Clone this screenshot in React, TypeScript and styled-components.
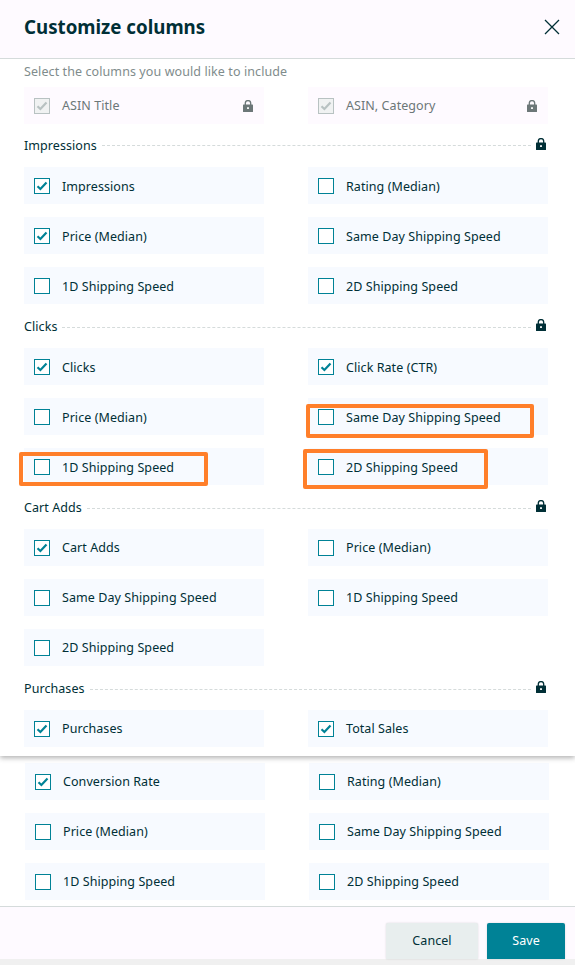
import React from "react";
import styled, { createGlobalStyle } from "styled-components";

const Global = createGlobalStyle`
  html, body { margin: 0; padding: 0; background: #f0f0f0; }
  body { font-family: "Noto Sans", "Open Sans", sans-serif; color: #002f36; }
  #root { width: 575px; height: 965px; overflow: hidden; }
`;

const Page = styled.div`
  width: 575px;
  height: 959px;
  background: #fff;
  display: flex;
  flex-direction: column;
`;

const TopSheet = styled.div`
  height: 756px;
  flex: none;
  background: #fff;
  box-shadow: 0 2px 5px rgba(0, 0, 0, 0.3);
  position: relative;
  z-index: 1;
`;

const Header = styled.header`
  box-sizing: border-box;
  background: #fefaff;
  border-bottom: 1px solid #d5dbdb;
  height: 59px;
  display: flex;
  align-items: center;
  justify-content: space-between;
  padding: 0 15px 4px 24px;
`;

const Title = styled.h1`
  margin: 0;
  font-size: 18.7px;
  line-height: 26px;
  font-weight: 700;
  color: #002f36;
`;

const CloseButton = styled.button`
  border: 0;
  padding: 0;
  background: none;
  width: 16px;
  height: 16px;
  display: flex;
  color: #002f36;
`;

const Body = styled.div`
  padding: 0 27px 0 24px;
`;

const Hint = styled.p`
  margin: 0;
  height: 28px;
  font-size: 12.5px;
  line-height: 26px;
  color: #7f8c8c;
  letter-spacing: 0.09px;
`;

const Row = styled.div<{ $locked?: boolean }>`
  position: relative;
  height: 37px;
  box-sizing: border-box;
  display: flex;
  align-items: center;
  gap: 12px;
  padding: ${(p) => (p.$locked ? "0" : "1px")} 11px 0 10px;
  background: ${(p) => (p.$locked ? "#fefaff" : "#f7faff")};
`;

const Box = styled.span<{ $locked?: boolean }>`
  width: 16px;
  height: 16px;
  box-sizing: border-box;
  flex: none;
  display: flex;
  align-items: center;
  justify-content: center;
  background: ${(p) => (p.$locked ? "#f0f2f2" : "#fff")};
  border: 1.4px solid ${(p) => (p.$locked ? "#b8c2c2" : "#008296")};
`;

const Label = styled.span<{ $locked?: boolean }>`
  flex: 1;
  font-size: 12.5px;
  line-height: 18px;
  letter-spacing: 0.07px;
  color: ${(p) => (p.$locked ? "#6c7778" : "#002f36")};
`;

const Grid = styled.div<{ $lowText?: boolean }>`
  display: grid;
  grid-template-columns: 240px 240px;
  column-gap: 44px;
  row-gap: 13px;

  ${Label} {
    padding-top: ${(p) => (p.$lowText ? "2px" : "0")};
  }
`;

const SectionHead = styled.div<{ $first?: boolean }>`
  height: ${(p) => (p.$first ? "43px" : "44px")};
  padding: ${(p) => (p.$first ? "0" : "2px")} 2px 0 0;
  display: flex;
  align-items: center;
  gap: 5px;
  box-sizing: border-box;

  svg {
    margin-bottom: ${(p) => (p.$first ? "3px" : "4px")};
  }
`;

const SectionName = styled.span`
  font-size: 12.5px;
  line-height: 18px;
  letter-spacing: 0.07px;
  color: #002f36;
`;

const Dash = styled.span`
  flex: 1;
  border-top: 1px dashed #d5dbdb;
`;

const Highlight = styled.span<{ $l: number; $t: number; $w: number; $h: number }>`
  position: absolute;
  left: ${(p) => p.$l}px;
  top: ${(p) => p.$t}px;
  width: ${(p) => p.$w}px;
  height: ${(p) => p.$h}px;
  box-sizing: border-box;
  border: 4px solid #ff7f2a;
  border-radius: 2px;
  pointer-events: none;
`;

const LowerGrid = styled(Grid)`
  padding: 7px 26px 0 25px;
`;

const Footer = styled.footer`
  margin-top: 6px;
  flex: 1;
  border-top: 1px solid #d5dbdb;
  background: #fefaff;
  display: flex;
  justify-content: flex-end;
  align-items: flex-end;
  gap: 9px;
  padding-right: 10px;
`;

const Button = styled.button<{ $primary?: boolean }>`
  height: 36px;
  width: ${(p) => (p.$primary ? "78px" : "92px")};
  border: 0;
  border-radius: 2px 2px 0 0;
  font-family: inherit;
  font-size: 12.5px;
  letter-spacing: 0.07px;
  padding: 0 0 2px;
  color: ${(p) => (p.$primary ? "#fff" : "#002f36")};
  background: ${(p) => (p.$primary ? "#008296" : "#e8eeee")};
  box-shadow: 0 0 2px rgba(0, 0, 0, 0.15);
`;

const Check = () => (
  <svg width="12" height="10" viewBox="0 0 12 10">
    <path d="M1.5 5.2 4.4 8 10.5 1.4" fill="none" stroke="currentColor" strokeWidth="2.2" />
  </svg>
);

const CheckInk = styled.span<{ $locked?: boolean }>`
  display: flex;
  color: ${(p) => (p.$locked ? "#b8c2c2" : "#008296")};
`;

const Lock = ({ color }: { color: string }) => (
  <svg width="10" height="12" viewBox="0 0 10 12" style={{ flex: "none" }}>
    <path d="M2.3 5V3.3a2.7 2.7 0 0 1 5.4 0V5" fill="none" stroke={color} strokeWidth="1.3" />
    <rect x="0" y="4.6" width="10" height="7.4" rx="0.6" fill={color} />
    <rect x="4.1" y="7.2" width="1.8" height="1.8" fill="#fff" />
  </svg>
);

type Mark = { l: number; t: number; w: number; h: number };
type Item = { label: string; on?: boolean; mark?: Mark };

const Option = ({ label, on, mark }: Item) => (
  <Row>
    <Box>
      {on && (
        <CheckInk>
          <Check />
        </CheckInk>
      )}
    </Box>
    <Label>{label}</Label>
    {mark && <Highlight $l={mark.l} $t={mark.t} $w={mark.w} $h={mark.h} />}
  </Row>
);

const LockedOption = ({ label }: { label: string }) => (
  <Row $locked>
    <Box $locked>
      <CheckInk $locked>
        <Check />
      </CheckInk>
    </Box>
    <Label $locked>{label}</Label>
    <Lock color="#6c7778" />
  </Row>
);

const Section = ({
  name,
  items,
  first,
  lowText,
}: {
  name: string;
  items: Item[];
  first?: boolean;
  lowText?: boolean;
}) => (
  <>
    <SectionHead $first={first}>
      <SectionName>{name}</SectionName>
      <Dash />
      <Lock color="#002f36" />
    </SectionHead>
    <Grid $lowText={lowText}>
      {items.map((i, n) => (
        <Option key={n} {...i} />
      ))}
    </Grid>
  </>
);

export default function App() {
  return (
    <>
      <Global />
      <Page>
        <TopSheet>
          <Header>
            <Title>Customize columns</Title>
            <CloseButton aria-label="Close">
              <svg width="16" height="16" viewBox="0 0 16 16">
                <path d="M1 1 15 15M15 1 1 15" stroke="currentColor" strokeWidth="1.3" fill="none" />
              </svg>
            </CloseButton>
          </Header>
          <Body>
            <Hint>Select the columns you would like to include</Hint>
            <Grid>
              <LockedOption label="ASIN Title" />
              <LockedOption label="ASIN, Category" />
            </Grid>
            <Section
              first
              lowText
              name="Impressions"
              items={[
                { label: "Impressions", on: true },
                { label: "Rating (Median)" },
                { label: "Price (Median)", on: true },
                { label: "Same Day Shipping Speed" },
                { label: "1D Shipping Speed" },
                { label: "2D Shipping Speed" },
              ]}
            />
            <Section
              lowText
              name="Clicks"
              items={[
                { label: "Clicks", on: true },
                { label: "Click Rate (CTR)", on: true },
                { label: "Price (Median)" },
                { label: "Same Day Shipping Speed", mark: { l: -2, t: 6, w: 228, h: 34 } },
                { label: "1D Shipping Speed", mark: { l: -5, t: 4, w: 189, h: 34 } },
                { label: "2D Shipping Speed", mark: { l: -5, t: 1, w: 185, h: 40 } },
              ]}
            />
            <Section
              name="Cart Adds"
              items={[
                { label: "Cart Adds", on: true },
                { label: "Price (Median)" },
                { label: "Same Day Shipping Speed" },
                { label: "1D Shipping Speed" },
                { label: "2D Shipping Speed" },
              ]}
            />
            <Section
              name="Purchases"
              items={[
                { label: "Purchases", on: true },
                { label: "Total Sales", on: true },
              ]}
            />
          </Body>
        </TopSheet>
        <LowerGrid>
          <Option label="Conversion Rate" on />
          <Option label="Rating (Median)" />
          <Option label="Price (Median)" />
          <Option label="Same Day Shipping Speed" />
          <Option label="1D Shipping Speed" />
          <Option label="2D Shipping Speed" />
        </LowerGrid>
        <Footer>
          <Button>Cancel</Button>
          <Button $primary>Save</Button>
        </Footer>
      </Page>
    </>
  );
}
